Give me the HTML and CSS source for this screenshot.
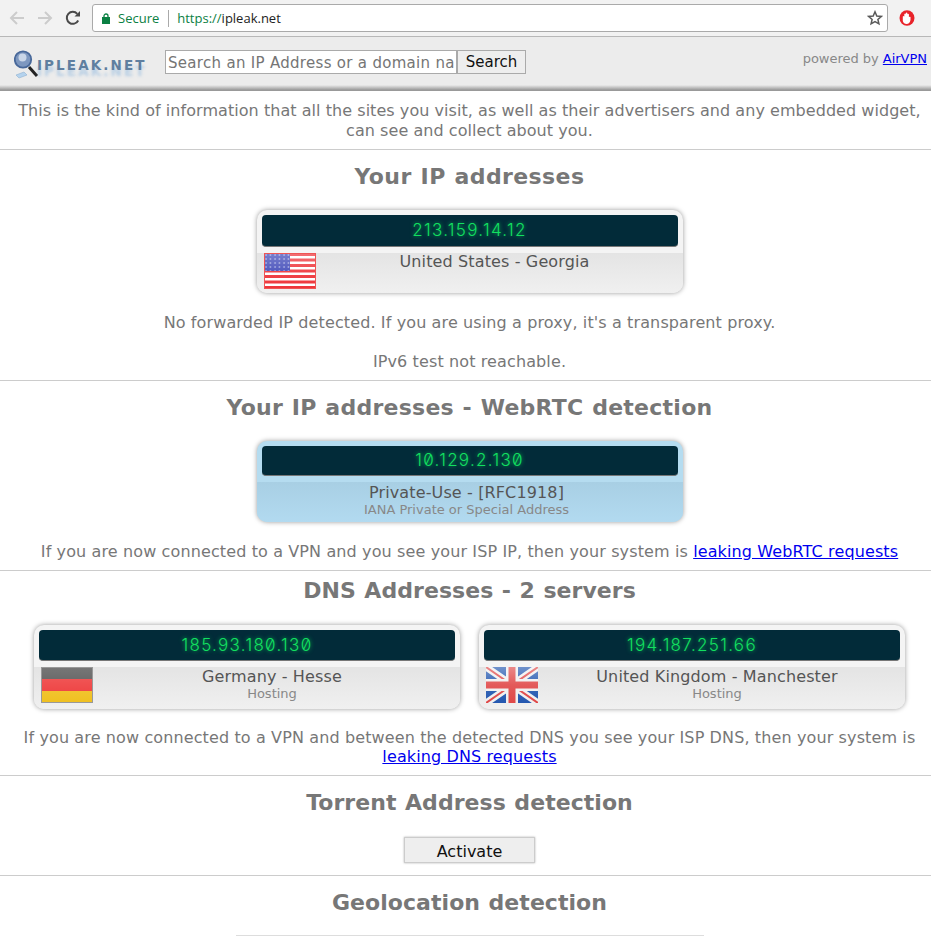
FILE: index.html
```html
<!DOCTYPE html>
<html lang="en">
<head>
    <meta charset="UTF-8">
    <meta name="viewport" content="width=device-width, initial-scale=1.0">
    <title>IP/DNS Detect</title>
    <link rel="stylesheet" href="styles.css">
</head>
<body>

<div class="browser-bar">
    <svg class="nav-icon" width="16" height="16" viewBox="0 0 16 16"><path d="M15 8H2M8 2 2 8l6 6" fill="none" stroke="#ccc" stroke-width="2"/></svg>
    <svg class="nav-icon" width="16" height="16" viewBox="0 0 16 16"><path d="M1 8h13M8 2l6 6-6 6" fill="none" stroke="#ccc" stroke-width="2"/></svg>
    <svg class="nav-icon" width="16" height="16" viewBox="0 0 16 16"><path d="M13.2 10.5A6 6 0 1 1 12.3 3.8" fill="none" stroke="#4a4a4a" stroke-width="2"/><path d="M9.5 6.5H15V1z" fill="#4a4a4a"/></svg>
    <div class="address-box">
        <svg width="8" height="11" viewBox="0 0 8 11"><path d="M2 4.500V3a2 2 0 0 1 4 0v1.500" fill="none" stroke="#0b8043" stroke-width="1.300"/><rect y="4" width="8" height="7" fill="#0b8043"/></svg>
        <span class="secure">Secure</span>
        <span class="address-sep"></span>
        <span class="address-url"><span class="scheme">https://</span>ipleak.net</span>
        <svg class="star" width="16" height="16" viewBox="0 0 16 16"><path d="M8 1.800 9.800 6l4.500.4-3.400 3 1 4.400L8 11.500l-3.900 2.300 1-4.400-3.400-3L6.200 6z" fill="none" stroke="#5a5a5a" stroke-width="1.500"/></svg>
    </div>
    <svg class="opera" width="16" height="16" viewBox="0 0 16 16"><ellipse cx="8" cy="8" rx="7.500" ry="7.800" fill="#e8232a"/><path d="M3.800 11V6.500q.9-1 1.500 0V4.200q.8-1.200 1.500 0V3q.9-1.100 1.600 0v1.200q.8-1 1.500 0v2.900q1-.8 1.600 0v2.900q-.8 4-3.900 4-3 0-3.800-3z" fill="#fff"/></svg>
</div>

<div class="page">
    <div class="top-header">
        <div class="logo">
            <svg width="26" height="32" viewBox="0 0 26 32">
                <path d="M15 18l8 9" stroke="#222" stroke-width="3"/>
                <path d="M2 26l8-3 3 3-8 3z" fill="#b5d3ee" stroke="#8fb0d0" stroke-width=".6"/>
                <circle cx="9" cy="10.500" r="8.200" fill="#7d97bf" stroke="#48689a" stroke-width="1.800"/>
                <circle cx="8.500" cy="8.500" r="4" fill="#c9d6e8"/>
            </svg>
            <span class="logo-text">IPLEAK.NET</span>
        </div>
        <form class="search-form">
            <input class="search-input" type="text" placeholder="Search an IP Address or a domain name">
            <button class="search-button" type="button">Search</button>
        </form>
        <div class="powered">powered by <a href="#">AirVPN</a></div>
    </div>

    <div class="intro">This is the kind of information that all the sites you visit, as well as their advertisers and any embedded widget,<br>can see and collect about you.</div>

    <div class="section section-ip">
        <h2>Your IP addresses</h2>
        <div class="cards">
            <div class="card">
                <div class="ip">213.159.14.12</div>
                <div class="card-info">
                    <svg class="flag" viewBox="0 0 52 36">
                        <defs>
                            <linearGradient id="gloss-us" x1="0" y1="0" x2="0" y2="1">
                                <stop offset="0" stop-color="#fff" stop-opacity=".3"/>
                                <stop offset=".5" stop-color="#fff" stop-opacity=".1"/>
                                <stop offset="1" stop-color="#fff" stop-opacity="0"/>
                            </linearGradient>
                            <pattern id="stars" width="4.500" height="4" patternUnits="userSpaceOnUse">
                                <circle cx="2" cy="2" r=".8" fill="#c8ccf0"/>
                            </pattern>
                        </defs>
                        <rect width="52" height="36" fill="#fff"/>
                        <path d="M0 1.500h52M0 7h52M0 12.500h52M0 18h52M0 23.500h52M0 29h52M0 34.500h52" stroke="#ee3338" stroke-width="2.800"/>
                        <rect width="26" height="18" fill="#3f49b8"/>
                        <rect width="26" height="18" fill="url(#stars)"/>
                        <rect width="52" height="36" fill="url(#gloss-us)"/>
                        <rect x=".500" y=".500" width="51" height="35" fill="none" stroke="#e55" stroke-width="1"/>
                    </svg>
                    <div class="place"><div class="place-name">United States - Georgia</div></div>
                </div>
            </div>
        </div>
        <p class="note note-forward">No forwarded IP detected. If you are using a proxy, it's a transparent proxy.</p>
        <p class="note note-v6">IPv6 test not reachable.</p>
    </div>

    <div class="section section-webrtc">
        <h2>Your IP addresses - WebRTC detection</h2>
        <div class="cards">
            <div class="card card-private">
                <div class="ip">10.129.2.130</div>
                <div class="card-info">
                    <div class="place">
                        <div class="place-name">Private-Use - [RFC1918]</div>
                        <div class="place-sub">IANA Private or Special Address</div>
                    </div>
                </div>
            </div>
        </div>
        <p class="note note-leak">If you are now connected to a VPN and you see your ISP IP, then your system is <a href="#">leaking WebRTC requests</a></p>
    </div>

    <div class="section section-dns">
        <h2>DNS Addresses - 2 servers</h2>
        <div class="cards">
            <div class="card">
                <div class="ip">185.93.180.130</div>
                <div class="card-info">
                    <svg class="flag" viewBox="0 0 52 36">
                        <defs>
                            <linearGradient id="gloss-de" x1="0" y1="0" x2="0" y2="1">
                                <stop offset="0" stop-color="#fff" stop-opacity=".2"/>
                                <stop offset="1" stop-color="#fff" stop-opacity="0"/>
                            </linearGradient>
                        </defs>
                        <rect width="52" height="12" fill="#555"/>
                        <rect y="12" width="52" height="12" fill="#ee3a3a"/>
                        <rect y="24" width="52" height="12" fill="#f0c020"/>
                        <rect width="52" height="36" fill="url(#gloss-de)"/>
                        <rect x=".500" y=".500" width="51" height="35" fill="none" stroke="#999" stroke-width="1"/>
                    </svg>
                    <div class="place">
                        <div class="place-name">Germany - Hesse</div>
                        <div class="place-sub">Hosting</div>
                    </div>
                </div>
            </div>
            <div class="card">
                <div class="ip">194.187.251.66</div>
                <div class="card-info">
                    <svg class="flag" viewBox="0 0 52 36">
                        <defs>
                            <linearGradient id="gloss-uk" x1="0" y1="0" x2="0" y2="1">
                                <stop offset="0" stop-color="#fff" stop-opacity=".35"/>
                                <stop offset=".5" stop-color="#fff" stop-opacity=".1"/>
                                <stop offset="1" stop-color="#fff" stop-opacity="0"/>
                            </linearGradient>
                        </defs>
                        <rect width="52" height="36" fill="#2458b0"/>
                        <path d="M0 0l52 36M52 0 0 36" stroke="#f0f0f0" stroke-width="7"/>
                        <path d="M0 0l52 36M52 0 0 36" stroke="#e04848" stroke-width="2"/>
                        <path d="M26 0v36M0 18h52" stroke="#f0f0f0" stroke-width="12"/>
                        <path d="M26 0v36M0 18h52" stroke="#e04848" stroke-width="7"/>
                        <rect width="52" height="36" fill="url(#gloss-uk)"/>
                    </svg>
                    <div class="place">
                        <div class="place-name">United Kingdom - Manchester</div>
                        <div class="place-sub">Hosting</div>
                    </div>
                </div>
            </div>
        </div>
        <p class="note note-leak">If you are now connected to a VPN and between the detected DNS you see your ISP DNS, then your system is <a href="#">leaking DNS requests</a></p>
    </div>

    <div class="section section-torrent">
        <h2>Torrent Address detection</h2>
        <button class="activate" type="button">Activate</button>
    </div>

    <div class="section section-geo">
        <h2>Geolocation detection</h2>
        <div class="geo-box"></div>
    </div>
</div>

</body>
</html>
```

FILE: styles.css
```css
html, body {
    margin: 0;
    padding: 0;
    height: 936px;
    overflow: hidden;
    background-color: #fff;
}
body {
    font-family: "DejaVu Sans", Verdana, sans-serif;
    color: #777;
    width: 931px;
}
.browser-bar {
    box-sizing: border-box;
    height: 37px;
    background-color: #f2f2f2;
    border-bottom: 1px solid #b8b8b8;
    display: flex;
    align-items: center;
    padding: 0 0 0 9px;
}
.nav-icon {
    margin-right: 12px;
    flex: none;
}
.address-box {
    box-sizing: border-box;
    width: 796px;
    height: 28px;
    margin-left: -1px;
    background-color: #fff;
    border: 1px solid #aaa;
    border-radius: 3px;
    display: flex;
    align-items: center;
    padding-left: 9px;
    font-family: "Open Sans", sans-serif;
    font-size: 13px;
}
.secure {
    color: #0b8043;
    margin-left: 8px;
}
.address-sep {
    width: 1px;
    height: 17px;
    background-color: #aaa;
    margin: 0 8px 0 9px;
}
.address-url {
    color: #222;
}
.scheme {
    color: #0b8043;
}
.star {
    margin-left: auto;
    margin-right: 4px;
}
.opera {
    margin-left: 11px;
}
.page {
    width: 939px;
}
.top-header {
    box-sizing: border-box;
    height: 54px;
    background: linear-gradient(#ececec 0, #ececec 48px, #999 53px);
    display: flex;
    align-items: flex-start;
    position: relative;
    padding: 13px 12px 0 14px;
}
.logo {
    width: 151px;
    height: 36px;
    display: flex;
    align-items: flex-start;
}
.logo svg {
    margin-top: -1px;
    flex: none;
}
.logo-text {
    margin: 7px 0 0 -3px;
    font-size: 13.500px;
    line-height: 16px;
    font-weight: bold;
    letter-spacing: 2.100px;
    color: #5f7fa0;
    text-shadow: 0 6px 3px rgba(120, 170, 220, 0.45);
}
.search-form {
    display: flex;
    align-items: flex-start;
}
.search-input {
    box-sizing: border-box;
    width: 292px;
    height: 24px;
    padding: 2px 2px 0;
    border: 1px solid #aaa;
    font-family: "DejaVu Sans", sans-serif;
    font-size: 15px;
    letter-spacing: 0.300px;
}
.search-input::placeholder {
    color: #757575;
}
.search-button {
    box-sizing: border-box;
    width: 69px;
    height: 24px;
    padding: 0;
    background-color: #eee;
    border: 1px solid #aaa;
    color: #111;
    font-family: "DejaVu Sans", sans-serif;
    font-size: 15px;
}
.powered {
    font-size: 13px;
    letter-spacing: -0.020px;
    color: #888;
    position: absolute;
    right: 12px;
    top: 14px;
}
a {
    color: #00e;
}
.intro {
    font-size: 16px;
    letter-spacing: 0.050px;
    line-height: 20px;
    text-align: center;
    padding: 10px 0 8px;
    color: #777;
    border-bottom: 1px solid #ccc;
}
.section {
    border-bottom: 1px solid #ccc;
    text-align: center;
}
h2 {
    margin: 0;
    font-size: 22px;
    line-height: 26px;
    letter-spacing: 0.050px;
    word-spacing: 0.800px;
    color: #777;
}
.section-ip h2 {
    letter-spacing: 0.400px;
}
.section-webrtc h2 {
    letter-spacing: 0.250px;
}
.cards {
    display: flex;
    justify-content: center;
    gap: 19px;
}
.card {
    box-sizing: border-box;
    width: 426px;
    border-radius: 10px;
    background-color: #f4f4f4;
    box-shadow: 0 0 5px rgba(0, 0, 0, 0.4);
    padding: 5px 0 0;
    overflow: hidden;
}
.ip {
    margin: 0 5px;
    height: 32px;
    line-height: 31px;
    border-radius: 4px;
    background-color: #022b39;
    border-bottom: 1px solid #777;
    box-sizing: border-box;
    color: #12e060;
    font-family: "Inter", sans-serif;
    font-feature-settings: "zero";
    font-size: 17px;
    font-weight: 300;
    letter-spacing: 1.300px;
    text-shadow: 0 0 4px rgba(15, 220, 92, 0.8);
}
.card-info {
    margin-top: 6px;
    height: 40px;
    display: flex;
    align-items: flex-start;
    padding: 0 9px 0 7px;
    background: linear-gradient(#e4e4e4, #f0f0f0);
}
.flag {
    width: 52px;
    height: 36px;
    flex: none;
}
.place {
    flex: 1;
    margin-top: -1px;
}
.place-name {
    font-size: 16px;
    letter-spacing: 0.130px;
    line-height: 20px;
    color: #555;
}
.place-sub {
    font-size: 13px;
    line-height: 15px;
    color: #888;
}
.card-private {
    background-color: #b5dcf0;
}
.card-private .ip {
    height: 30px;
    line-height: 29px;
}
.card-private .card-info {
    padding: 0 6px 0 0;
    background: linear-gradient(#a8cfe4, #b2daf0);
}
.card-private .place {
    margin-top: 1px;
}
.card-private .place-sub {
    line-height: 14px;
}
.section-dns .ip {
    height: 31px;
    line-height: 30px;
}
.section-dns .card-info {
    height: 42px;
}
.section-dns .place {
    margin-top: 0;
}
.section-dns .place-sub {
    line-height: 14px;
}
.note {
    margin: 0;
    font-size: 16px;
    letter-spacing: 0.120px;
    line-height: 19px;
}
.section-ip {
    height: 231px;
    padding-top: 14px;
    box-sizing: border-box;
}
.section-ip .cards {
    margin-top: 20px;
}
.note-forward {
    margin-top: 20px;
}
.note-v6 {
    margin-top: 20px;
}
.section-webrtc {
    height: 190px;
    padding-top: 14px;
    box-sizing: border-box;
}
.section-webrtc .cards {
    margin-top: 20px;
}
.section-webrtc .note-leak {
    margin-top: 20px;
}
.section-dns {
    height: 205px;
    padding-top: 7px;
    box-sizing: border-box;
}
.section-dns .cards {
    margin-top: 21px;
}
.section-dns .note-leak {
    margin-top: 19px;
}
.section-torrent {
    height: 100px;
    padding-top: 14px;
    box-sizing: border-box;
}
.activate {
    display: block;
    margin: 21px auto 0;
    box-sizing: border-box;
    width: 131px;
    height: 26px;
    padding: 2px 0 0;
    background-color: #eee;
    border: 1px solid #ccc;
    box-shadow: 0 0 2px rgba(0, 0, 0, 0.3);
    color: #111;
    font-family: "DejaVu Sans", sans-serif;
    font-size: 16px;
}
.section-geo {
    padding-top: 14px;
    border-bottom: none;
}
.geo-box {
    width: 468px;
    height: 1px;
    margin: 19px auto 0;
    background-color: #ddd;
}
```
